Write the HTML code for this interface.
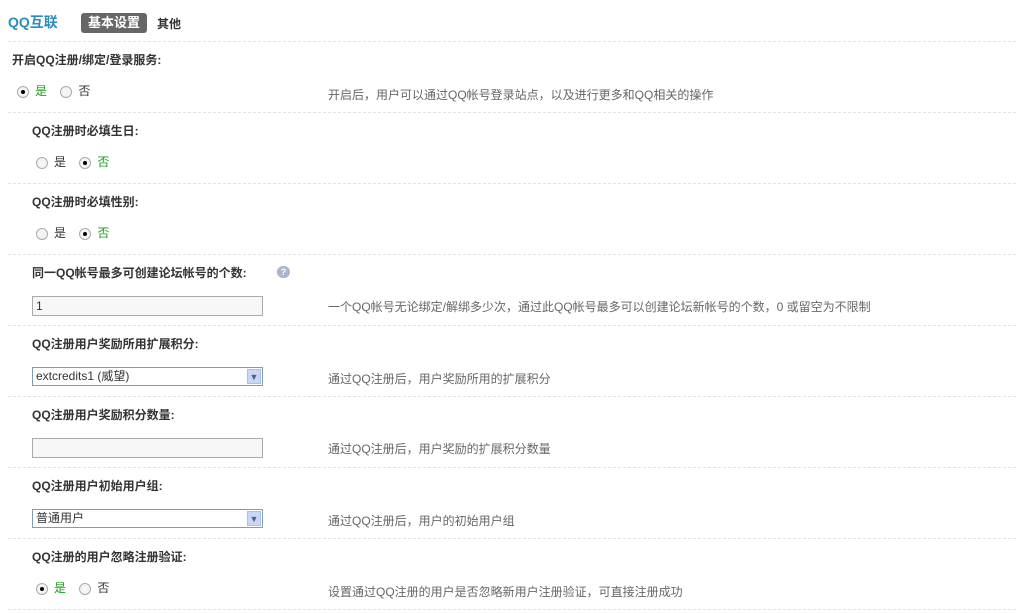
<!DOCTYPE html>
<html><head><meta charset="utf-8"><style>
body{margin:0;width:1018px;height:614px;background:#fff;font-family:"Liberation Sans","Noto Sans CJK SC",sans-serif;font-size:12px;color:#333;position:relative;overflow:hidden}
.a{position:absolute;white-space:nowrap}
.hr{position:absolute;left:8px;width:1008px;border-top:1px dashed #dde3e8;height:0}
.h{font-weight:bold;font-size:12px;color:#333}
.d{color:#666;font-size:12px}
.r{display:inline-block;width:10px;height:10px;border:1px solid #aaa;border-radius:50%;background:#f4f4f4;vertical-align:middle;position:relative;margin-right:6px}
.r.on:after{content:"";position:absolute;left:3px;top:3px;width:4px;height:4px;border-radius:50%;background:#000}
.g{color:#1a9e1a}
.in{position:absolute;width:226px;height:18px;border:1px solid #aaa;background:#f7f7f7;font-size:12px;line-height:18px;padding-left:3px;box-sizing:content-box}
.sel{position:absolute;width:226px;height:17px;border:1px solid #7f9db9;background:#fff;font-size:12px;line-height:17px;padding-left:3px}
.sel i{position:absolute;right:1px;top:1px;width:14px;height:15px;background:#c7d7f5;border:1px solid #a8c0e8;box-sizing:border-box;font-style:normal;font-size:9px;line-height:14px;text-align:center;color:#4d6185}
</style></head><body>
<div class="a" style="left:8px;top:12px;font-size:14px;font-weight:bold;color:#2a8cc0">QQ互联</div>
<div class="a" style="left:81px;top:13px;width:66px;height:20px;background:#666;border-radius:3px;color:#fff;font-weight:bold;font-size:13px;line-height:20px;text-align:center">基本设置</div>
<div class="a" style="left:157px;top:15px;font-weight:bold;color:#333">其他</div>
<div class="hr" style="top:41px"></div>

<div class="a h" style="left:12px;top:51px">开启QQ注册/绑定/登录服务:</div>
<div class="a" style="left:17px;top:82px"><span class="r on"></span><span class="g">是</span>&nbsp;&nbsp;&nbsp;&nbsp;<span class="r"></span>否</div>
<div class="a d" style="left:328px;top:86px">开启后，用户可以通过QQ帐号登录站点，以及进行更多和QQ相关的操作</div>
<div class="hr" style="top:112px"></div>

<div class="a h" style="left:32px;top:122px">QQ注册时必填生日:</div>
<div class="a" style="left:36px;top:153px"><span class="r"></span>是&nbsp;&nbsp;&nbsp;&nbsp;<span class="r on"></span><span class="g">否</span></div>
<div class="hr" style="top:183px"></div>

<div class="a h" style="left:32px;top:193px">QQ注册时必填性别:</div>
<div class="a" style="left:36px;top:224px"><span class="r"></span>是&nbsp;&nbsp;&nbsp;&nbsp;<span class="r on"></span><span class="g">否</span></div>
<div class="hr" style="top:254px"></div>

<div class="a h" style="left:32px;top:264px">同一QQ帐号最多可创建论坛帐号的个数:</div>
<div class="a" style="left:277px;top:266px;width:13px;height:12px;background:#a9b4d0;border-radius:6px;color:#fff;font-size:9px;line-height:12px;text-align:center;font-weight:bold">?</div>
<div class="in" style="left:32px;top:296px">1</div>
<div class="a d" style="left:328px;top:298px">一个QQ帐号无论绑定/解绑多少次，通过此QQ帐号最多可以创建论坛新帐号的个数，0 或留空为不限制</div>
<div class="hr" style="top:325px"></div>

<div class="a h" style="left:32px;top:335px">QQ注册用户奖励所用扩展积分:</div>
<div class="sel" style="left:32px;top:367px">extcredits1 (威望)<i>▼</i></div>
<div class="a d" style="left:328px;top:370px">通过QQ注册后，用户奖励所用的扩展积分</div>
<div class="hr" style="top:396px"></div>

<div class="a h" style="left:32px;top:406px">QQ注册用户奖励积分数量:</div>
<div class="in" style="left:32px;top:438px"></div>
<div class="a d" style="left:328px;top:440px">通过QQ注册后，用户奖励的扩展积分数量</div>
<div class="hr" style="top:467px"></div>

<div class="a h" style="left:32px;top:477px">QQ注册用户初始用户组:</div>
<div class="sel" style="left:32px;top:509px">普通用户<i>▼</i></div>
<div class="a d" style="left:328px;top:512px">通过QQ注册后，用户的初始用户组</div>
<div class="hr" style="top:538px"></div>

<div class="a h" style="left:32px;top:548px">QQ注册的用户忽略注册验证:</div>
<div class="a" style="left:36px;top:579px"><span class="r on"></span><span class="g">是</span>&nbsp;&nbsp;&nbsp;&nbsp;<span class="r"></span>否</div>
<div class="a d" style="left:328px;top:583px">设置通过QQ注册的用户是否忽略新用户注册验证，可直接注册成功</div>
<div class="hr" style="top:609px"></div>
</body></html>
